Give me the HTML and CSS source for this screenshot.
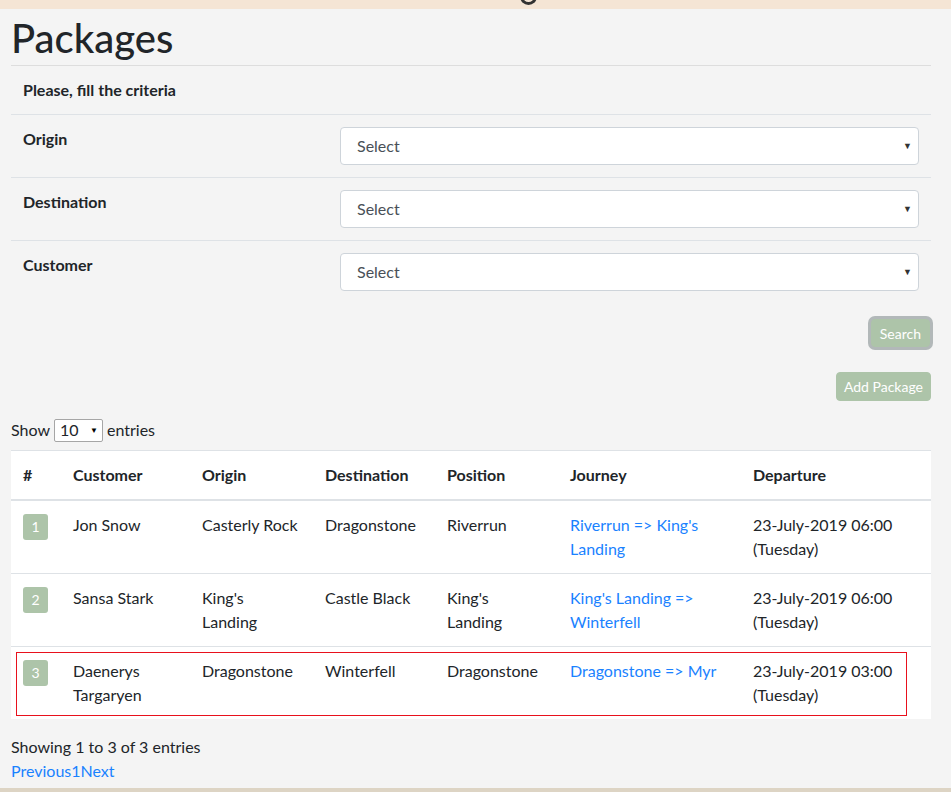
FILE: index.html
```html
<!DOCTYPE html>
<html lang="en">
<head>
<meta charset="utf-8">
<title>Packages</title>
<link rel="stylesheet" href="styles.css">
</head>
<body>
<div class="topband"><span class="glyph-tail"></span></div>
<main class="page">
  <h1 class="title">Packages</h1>
  <section class="criteria">
    <div class="crit-row crit-head"><div class="cell strong">Please, fill the criteria</div></div>
    <div class="crit-row">
      <div class="cell strong">Origin</div>
      <div class="cell"><div class="select"><span>Select</span><span class="arrow">▼</span></div></div>
    </div>
    <div class="crit-row">
      <div class="cell strong">Destination</div>
      <div class="cell"><div class="select"><span>Select</span><span class="arrow">▼</span></div></div>
    </div>
    <div class="crit-row">
      <div class="cell strong">Customer</div>
      <div class="cell"><div class="select"><span>Select</span><span class="arrow">▼</span></div></div>
    </div>
  </section>
  <div class="actions">
    <button class="btn btn-search">Search</button>
    <button class="btn btn-add">Add Package</button>
  </div>
  <div class="length">Show <span class="mini-select"><span>10</span><span class="arrow">▼</span></span> entries</div>
  <div class="table-wrap">
    <table class="data">
      <colgroup>
        <col class="c0"><col class="c1"><col class="c2"><col class="c3"><col class="c4"><col class="c5"><col class="c6">
      </colgroup>
      <thead>
        <tr><th>#</th><th>Customer</th><th>Origin</th><th>Destination</th><th>Position</th><th>Journey</th><th>Departure</th></tr>
      </thead>
      <tbody>
        <tr>
          <td><span class="badge">1</span></td>
          <td>Jon Snow</td><td>Casterly Rock</td><td>Dragonstone</td><td>Riverrun</td>
          <td><a href="#">Riverrun =&gt; King's Landing</a></td>
          <td>23-July-2019 06:00 (Tuesday)</td>
        </tr>
        <tr>
          <td><span class="badge">2</span></td>
          <td>Sansa Stark</td><td>King's Landing</td><td>Castle Black</td><td>King's Landing</td>
          <td><a href="#">King's Landing =&gt; Winterfell</a></td>
          <td>23-July-2019 06:00 (Tuesday)</td>
        </tr>
        <tr>
          <td><span class="badge">3</span></td>
          <td>Daenerys Targaryen</td><td>Dragonstone</td><td>Winterfell</td><td>Dragonstone</td>
          <td><a href="#">Dragonstone =&gt; Myr</a></td>
          <td>23-July-2019 03:00 (Tuesday)</td>
        </tr>
      </tbody>
    </table>
    <div class="highlight"></div>
  </div>
  <div class="info">Showing 1 to 3 of 3 entries</div>
  <div class="pager"><a href="#">Previous</a><a href="#">1</a><a href="#">Next</a></div>
</main>
<div class="bottomband"></div>
</body>
</html>
```

FILE: styles.css
```css
* { box-sizing: border-box; }
html, body { margin: 0; padding: 0; }
body {
  background: #f4f4f4;
  color: #212529;
  font-family: Lato, "Segoe UI", sans-serif;
  font-size: 16px;
  line-height: 24px;
  height: 792px;
  overflow: hidden;
}
.topband {
  height: 9px;
  background: #f5e5d5;
  overflow: hidden;
}
.glyph-tail {
  display: block;
  margin-left: 520px;
  margin-top: -4px;
  width: 17px;
  height: 9px;
  border: 3.5px solid #333;
  border-radius: 0 0 9px 9px;
}
.page {
  padding: 0 20px 0 11px;
  height: 779px;
}
.title {
  margin: 0;
  padding-top: 5px;
  height: 57px;
  font-size: 40px;
  line-height: 48px;
  font-weight: 500;
  border-bottom: 1px solid #dddddd;
}
.criteria { display: flex; flex-direction: column; }
.crit-row {
  display: grid;
  grid-template-columns: 317px 1fr;
  border-top: 1px solid #dee2e6;
}
.crit-row:first-child { border-top: none; }
.cell { padding: 12px 12px 12px 12px; }
.strong { font-weight: 700; }
.select {
  height: 38px;
  background: #fff;
  border: 1px solid #ced4da;
  border-radius: 4px;
  display: flex;
  align-items: center;
  justify-content: space-between;
  padding: 0 6px 0 16px;
  color: #495057;
}
.arrow { font-size: 9px; color: #333; }
.actions {
  display: flex;
  flex-direction: column;
  align-items: flex-end;
  padding-top: 16px;
}
.btn {
  font-family: inherit;
  color: #fff;
  background: #adc4a9;
  border: 1px solid #adc4a9;
  border-radius: 4px;
  font-size: 14px;
  cursor: pointer;
}
.btn-search {
  height: 28px;
  padding: 0 8px;
  margin-right: 1px;
  box-shadow: 0 0 0 3px #b2b8b9;
}
.btn-add {
  margin-top: 25px;
  height: 29px;
  padding: 0 7px;
}
.length {
  margin-top: 17px;
  display: flex;
  align-items: center;
  gap: 4px;
  height: 24px;
}
.mini-select {
  display: inline-flex;
  align-items: center;
  justify-content: space-between;
  width: 49px;
  height: 23px;
  background: #fff;
  border: 1px solid #a6a6a6;
  border-radius: 2px;
  padding: 0 4px 0 5px;
}
.mini-select .arrow { font-size: 8px; color: #000; }
.table-wrap {
  position: relative;
  margin-top: 8px;
  background: #fff;
}
.data {
  width: 100%;
  border-collapse: collapse;
  table-layout: fixed;
}
.c0 { width: 50px; }
.c1 { width: 129px; }
.c2 { width: 123px; }
.c3 { width: 122px; }
.c4 { width: 123px; }
.c5 { width: 183px; }
.c6 { width: 190px; }
.data th, .data td {
  padding: 12px;
  text-align: left;
  vertical-align: top;
  border-top: 1px solid #dee2e6;
}
.data th { font-weight: 700; border-bottom: 2px solid #dee2e6; }
.data a { color: #1a82ff; text-decoration: none; }
.badge {
  display: inline-block;
  width: 25px;
  height: 26px;
  margin-top: 1px;
  background: #adc4a9;
  color: #fff;
  border-radius: 3px;
  text-align: center;
  line-height: 26px;
  font-size: 14px;
}
.highlight {
  position: absolute;
  left: 5px;
  top: 202px;
  width: 891px;
  height: 64px;
  border: 1px solid #e8111d;
  pointer-events: none;
}
.info { margin-top: 16px; }
.pager a { color: #1a82ff; text-decoration: none; }
.bottomband {
  height: 4px;
  background: #ddd4c4;
}
```
